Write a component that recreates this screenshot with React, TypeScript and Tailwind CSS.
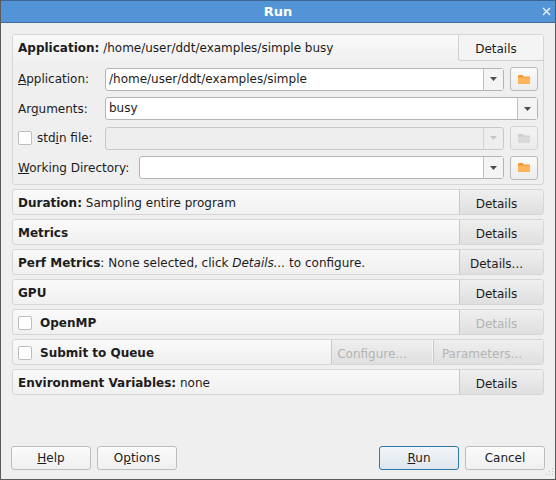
const font = "font-['DejaVu_Sans',sans-serif]";

function Folder({ disabled = false }: { disabled?: boolean }) {
  return (
    <svg width="12" height="9" viewBox="0 0 12 9">
      <path d="M0 1 Q0 0 1 0 H4.5 L6 1.5 H11 Q12 1.5 12 2.5 V8 Q12 9 11 9 H1 Q0 9 0 8 Z" fill={disabled ? "#cfcfcf" : "#f49a2c"} />
      <rect x="0" y="2.5" width="12" height="6.5" rx="0.5" fill={disabled ? "#dadada" : "#fdb45c"} />
    </svg>
  );
}

function Arrow({ disabled = false }: { disabled?: boolean }) {
  return (
    <svg width="7" height="4" viewBox="0 0 7 4">
      <path d="M0 0 H7 L3.5 4 Z" fill={disabled ? "#c4c4c4" : "#4d4d4d"} />
    </svg>
  );
}

function FolderButton({ disabled = false }: { disabled?: boolean }) {
  return (
    <div className={`ml-[6px] flex h-[24px] w-[28px] items-center justify-center rounded-[3px] border bg-gradient-to-b ${disabled ? "border-[#d4d4d4] from-[#f2f2f2] to-[#ebebeb]" : "border-[#b9b9b9] from-[#fbfbfb] to-[#ececec]"}`}>
      <Folder disabled={disabled} />
    </div>
  );
}

function Combo({ value = "", disabled = false, className = "" }: { value?: string; disabled?: boolean; className?: string }) {
  return (
    <div className={`flex h-[23px] items-stretch rounded-[3px] border ${disabled ? "border-[#c8c8c8] bg-[#eeeeee]" : "border-[#b4b4b4] bg-white"} ${className}`}>
      <div className="flex-1 truncate pl-[3px] leading-[21px]">{value}</div>
      <div className={`flex w-[20px] items-center justify-center border-l ${disabled ? "border-[#d4d4d4]" : "border-[#c0c0c0] bg-[#f4f4f4]"}`}>
        <Arrow disabled={disabled} />
      </div>
    </div>
  );
}

function Check() {
  return <div className="h-[14px] w-[14px] shrink-0 rounded-[2px] border border-[#bdbdbd] bg-white" />;
}

function Details({ label = "Details", disabled = false, className = "w-[84px] pr-[10px]" }: { label?: string; disabled?: boolean; className?: string }) {
  return (
    <div className={`ml-[1px] flex items-center justify-center border-l border-[#c8c8c8] bg-gradient-to-b from-[#efefef] to-[#dfdfdf] pt-[3px] ${disabled ? "text-[#b4b4b4]" : ""} ${className}`}>
      {label}
    </div>
  );
}

function Row({ children, details }: { children: React.ReactNode; details: React.ReactNode }) {
  return (
    <div className="flex h-[26px] shrink-0 items-stretch overflow-hidden rounded-[3px] border border-[#d6d6d6] bg-gradient-to-b from-[#fafafa] to-[#f0f0f0]">
      <div className="flex min-w-0 flex-1 items-center whitespace-nowrap pl-[5px] pt-[1px]">{children}</div>
      {details}
    </div>
  );
}

function Btn({ children, primary = false }: { children: React.ReactNode; primary?: boolean }) {
  return (
    <div className={`flex h-[24px] w-[80px] items-center justify-center rounded-[3px] border bg-gradient-to-b ${primary ? "border-[#2f78ab] from-[#f2f5f8] to-[#dfe6ee]" : "border-[#bdbdbd] from-[#fbfbfb] to-[#efefef]"}`}>
      {children}
    </div>
  );
}

export default function App() {
  return (
    <div className={`${font} relative flex h-[480px] w-[556px] flex-col overflow-hidden border border-t-0 border-[#5a5a5a] bg-[#efefef] text-[12px] text-[#1c1c1c]`}>
      <div className="relative flex h-[23px] shrink-0 items-center justify-center border-y border-t-[#3c6594] border-b-[#3e6b9c] bg-[#5294d6] text-[13px] font-bold text-white">
        Run
        <svg className="absolute right-[4px] top-[6px]" width="9" height="9" viewBox="0 0 9 9">
          <path d="M1 1 L8 8 M8 1 L1 8" stroke="#f4f8fc" strokeWidth="1.3" />
        </svg>
      </div>

      <div className="flex flex-1 flex-col gap-[4px] pl-[11px] pr-[11px] pt-[11px]">
        <div className="flex h-[151px] shrink-0 flex-col overflow-hidden rounded-[3px] border border-[#d6d6d6]">
          <div className="flex h-[26px] shrink-0 items-stretch bg-gradient-to-b from-[#fafafa] to-[#f0f0f0]">
            <div className="flex flex-1 items-center pl-[5px]">
              <b>Application:</b>&nbsp;/home/user/ddt/examples/simple busy
            </div>
            <div className="flex w-[85px] items-center justify-center rounded-bl-[3px] border-b border-l border-[#cfcfcf] bg-[#f4f4f4] pr-[10px] pt-[2px]">Details</div>
          </div>
          <div className="flex flex-1 flex-col gap-[5.5px] pl-[5px] pr-[5px] pt-[6px]">
            <div className="flex h-[24px] items-center">
              <span className="w-[87px]"><span className="underline">A</span>pplication:</span>
              <Combo value="/home/user/ddt/examples/simple" className="flex-1" />
              <FolderButton />
            </div>
            <div className="flex h-[24px] items-center">
              <span className="w-[87px]">Ar<span className="underline">g</span>uments:</span>
              <Combo value="busy" className="flex-1" />
            </div>
            <div className="flex h-[24px] items-center">
              <span className="flex w-[87px] items-center gap-[5px]"><Check /><span>std<span className="underline">i</span>n file:</span></span>
              <Combo disabled className="flex-1" />
              <FolderButton disabled />
            </div>
            <div className="flex h-[24px] items-center">
              <span className="w-[121px] pt-[1px]"><span className="underline">W</span>orking Directory:</span>
              <Combo className="flex-1" />
              <FolderButton />
            </div>
          </div>
        </div>

        <Row details={<Details />}><b>Duration:</b>&nbsp;Sampling entire program</Row>
        <Row details={<Details />}><b>Metrics</b></Row>
        <Row details={<Details label="Details..." />}><b>Perf Metrics</b>: None selected, click&nbsp;<i>Details...</i>&nbsp;to configure.</Row>
        <Row details={<Details />}><b>GPU</b></Row>
        <Row details={<Details disabled />}><Check /><b className="ml-[8px]">OpenMP</b></Row>
        <Row
          details={
            <>
              <Details label="Configure..." disabled className="w-[101px] pr-[20px]" />
              <Details label="Parameters..." disabled className="w-[110px] pr-[13px]" />
            </>
          }
        >
          <Check /><b className="ml-[8px]">Submit to Queue</b>
        </Row>
        <Row details={<Details />}><b>Environment Variables:</b>&nbsp;none</Row>
      </div>

      <div className="flex items-center gap-[6px] pb-[9px] pl-[10px] pr-[10px]">
        <Btn><span><span className="underline">H</span>elp</span></Btn>
        <Btn><span>O<span className="underline">p</span>tions</span></Btn>
        <div className="flex-1" />
        <Btn primary><span><span className="underline">R</span>un</span></Btn>
        <Btn>Cancel</Btn>
      </div>

      <svg className="absolute bottom-[1px] right-[1px]" width="10" height="10" viewBox="0 0 10 10" fill="#c4c4c4">
        <rect x="8" y="0" width="1" height="1" /><rect x="5" y="3" width="1" height="1" /><rect x="8" y="3" width="1" height="1" />
        <rect x="2" y="6" width="1" height="1" /><rect x="5" y="6" width="1" height="1" /><rect x="8" y="6" width="1" height="1" />
      </svg>
    </div>
  );
}
